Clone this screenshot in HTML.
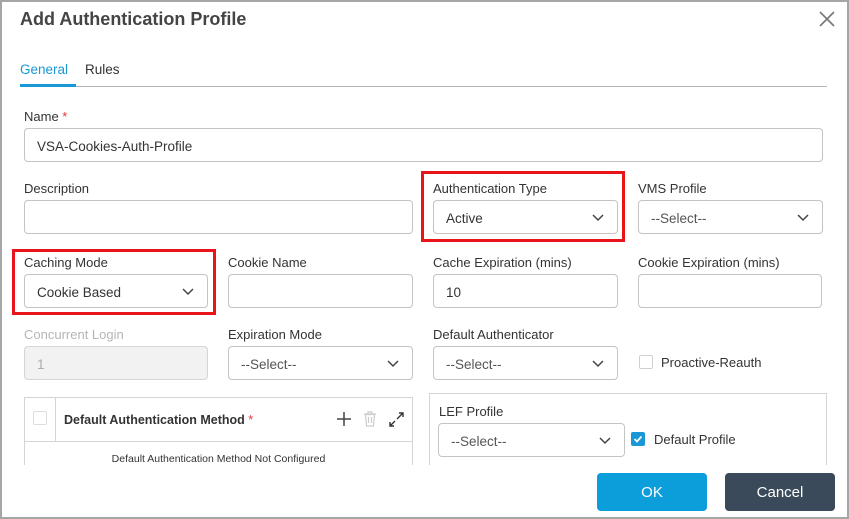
<!DOCTYPE html>
<html><head><style>
*{box-sizing:border-box;margin:0;padding:0}
body{width:849px;height:519px;background:#fff;font-family:"Liberation Sans",sans-serif;position:relative;overflow:hidden;color:#333}
.a{position:absolute}
.frame{left:0;top:0;width:849px;height:519px;border:2px solid #a6a6a6}
.lbl{font-size:13px;color:#333;white-space:nowrap}
.in{border:1px solid #c4c4c4;border-radius:4px;height:34px;font-size:13.5px;color:#333;padding-left:12px;line-height:35px;background:#fff}
.sel svg{position:absolute;right:13px;top:13px}
.red{border:3px solid #e8141a}
</style></head><body>
<div class="a frame"></div>
<div class="a" style="left:20px;top:9px;font-size:18px;font-weight:bold;color:#444">Add Authentication Profile</div>
<svg class="a" style="left:819px;top:11px" width="16" height="16"><path d="M1 1L15 15M15 1L1 15" stroke="#777" stroke-width="1.6"/></svg>
<div class="a" style="left:20px;top:62px;font-size:13.5px;color:#1a98d5">General</div>
<div class="a" style="left:85px;top:62px;font-size:13.5px;color:#333">Rules</div>
<div class="a" style="left:20px;top:86px;width:807px;height:1px;background:#b5b5b5"></div>
<div class="a" style="left:20px;top:84px;width:56px;height:3px;background:#1a98d5"></div>

<div class="a lbl" style="left:24px;top:109px">Name <span style="color:#e33">*</span></div>
<div class="a in" style="left:24px;top:128px;width:799px">VSA-Cookies-Auth-Profile</div>

<div class="a lbl" style="left:24px;top:181px">Description</div>
<div class="a in" style="left:24px;top:200px;width:389px"></div>
<div class="a red" style="left:421px;top:171px;width:204px;height:71px"></div>
<div class="a lbl" style="left:433px;top:181px">Authentication Type</div>
<div class="a in sel" style="left:433px;top:200px;width:185px">Active<svg width="12" height="8"><path d="M1 1L6 6L11 1" fill="none" stroke="#444" stroke-width="1.5"/></svg></div>
<div class="a lbl" style="left:638px;top:181px">VMS Profile</div>
<div class="a in sel" style="left:638px;top:200px;width:185px;color:#555">--Select--<svg width="12" height="8"><path d="M1 1L6 6L11 1" fill="none" stroke="#444" stroke-width="1.5"/></svg></div>

<div class="a red" style="left:12px;top:249px;width:204px;height:66px"></div>
<div class="a lbl" style="left:24px;top:255px">Caching Mode</div>
<div class="a in sel" style="left:24px;top:274px;width:184px">Cookie Based<svg width="12" height="8"><path d="M1 1L6 6L11 1" fill="none" stroke="#444" stroke-width="1.5"/></svg></div>
<div class="a lbl" style="left:228px;top:255px">Cookie Name</div>
<div class="a in" style="left:228px;top:274px;width:185px"></div>
<div class="a lbl" style="left:433px;top:255px">Cache Expiration (mins)</div>
<div class="a in" style="left:433px;top:274px;width:185px">10</div>
<div class="a lbl" style="left:638px;top:255px">Cookie Expiration (mins)</div>
<div class="a in" style="left:638px;top:274px;width:184px"></div>

<div class="a lbl" style="left:24px;top:327px;color:#b5b5b5">Concurrent Login</div>
<div class="a in" style="left:24px;top:346px;width:184px;background:#f2f2f2;color:#aaa;border-color:#d5d5d5">1</div>
<div class="a lbl" style="left:228px;top:327px">Expiration Mode</div>
<div class="a in sel" style="left:228px;top:346px;width:185px;color:#555">--Select--<svg width="12" height="8"><path d="M1 1L6 6L11 1" fill="none" stroke="#444" stroke-width="1.5"/></svg></div>
<div class="a lbl" style="left:433px;top:327px">Default Authenticator</div>
<div class="a in sel" style="left:433px;top:346px;width:185px;color:#555">--Select--<svg width="12" height="8"><path d="M1 1L6 6L11 1" fill="none" stroke="#444" stroke-width="1.5"/></svg></div>
<div class="a" style="left:639px;top:355px;width:14px;height:14px;border:1px solid #d0d0d0;border-radius:2px"></div>
<div class="a lbl" style="left:661px;top:355px">Proactive-Reauth</div>

<div class="a" style="left:24px;top:397px;width:389px;height:80px;border:1px solid #d5d5d5"></div>
<div class="a" style="left:24px;top:441px;width:389px;height:1px;background:#d5d5d5"></div>
<div class="a" style="left:55px;top:397px;width:1px;height:44px;background:#d5d5d5"></div>
<div class="a" style="left:33px;top:411px;width:14px;height:14px;border:1px solid #ddd;border-radius:2px"></div>
<div class="a" style="left:64px;top:413px;font-size:12.5px;font-weight:bold;color:#333">Default Authentication Method <span style="color:#e33;font-weight:normal">*</span></div>
<svg class="a" style="left:337px;top:412px" width="14" height="14"><path d="M7 0V14M0 7H14" stroke="#444" stroke-width="1.5"/></svg>
<svg class="a" style="left:363px;top:411px" width="14" height="16"><path d="M1 3H13M5 3V1H9V3M2.5 3.5L3.5 15H10.5L11.5 3.5Z M5.5 6V12M8.5 6V12" fill="none" stroke="#ccc" stroke-width="1.2"/></svg>
<svg class="a" style="left:388px;top:412px" width="17" height="16"><path d="M9 7L15 1M11 1H15V5M7 9L2 14M2 10V14H6" fill="none" stroke="#333" stroke-width="1.4"/></svg>
<div class="a" style="left:24px;top:453px;width:389px;text-align:center;font-size:10.5px;color:#333">Default Authentication Method Not Configured</div>

<div class="a" style="left:429px;top:393px;width:398px;height:84px;border:1px solid #d5d5d5"></div>
<div class="a lbl" style="left:439px;top:404px">LEF Profile</div>
<div class="a in sel" style="left:438px;top:423px;width:187px;color:#555">--Select--<svg width="12" height="8"><path d="M1 1L6 6L11 1" fill="none" stroke="#444" stroke-width="1.5"/></svg></div>
<div class="a" style="left:631px;top:432px;width:14px;height:14px;background:#1a98d5;border-radius:2px"><svg width="14" height="14"><path d="M3.5 7L6 9.5L10.5 4.5" fill="none" stroke="#fff" stroke-width="1.8"/></svg></div>
<div class="a lbl" style="left:654px;top:432px">Default Profile</div>

<div class="a" style="left:2px;top:465px;width:845px;height:52px;background:#fff"></div>
<div class="a" style="left:597px;top:473px;width:110px;height:38px;background:#0c9ddb;border-radius:4px;color:#fff;font-size:15px;text-align:center;line-height:40px">OK</div>
<div class="a" style="left:725px;top:473px;width:110px;height:38px;background:#3a4a5a;border-radius:4px;color:#fff;font-size:15px;text-align:center;line-height:40px">Cancel</div>
<div class="a" style="left:0;top:517px;width:849px;height:2px;background:#a6a6a6"></div>
</body></html>
